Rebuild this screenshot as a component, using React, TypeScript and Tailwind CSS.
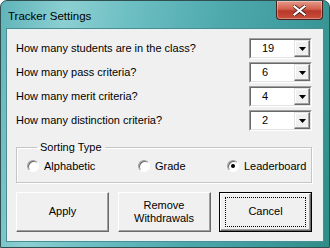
import { useState } from 'react';

type Sort = 'alpha' | 'grade' | 'leader';

const questions = [
  { label: 'How many students are in the class?', value: '19' },
  { label: 'How many pass criteria?', value: '6' },
  { label: 'How many merit criteria?', value: '4' },
  { label: 'How many distinction criteria?', value: '2' },
];

function Combo({ value }: { value: string }) {
  return (
    <div className="flex h-[21px] w-[63px] border border-t-[#a0a0a0] border-l-[#a0a0a0] border-b-white border-r-white bg-white">
      <div className="flex flex-1 border border-t-[#696969] border-l-[#696969] border-b-[#e3e3e3] border-r-[#e3e3e3]">
        <span className="flex-1 pl-[11px] leading-[17px]">{value}</span>
        <div className="flex w-[16px] items-center justify-center border border-t-[#e3e3e3] border-l-[#e3e3e3] border-b-[#696969] border-r-[#696969] bg-[#f0f0f0] shadow-[inset_-1px_-1px_0_#a0a0a0,inset_1px_1px_0_#fff]">
          <svg width="7" height="4" viewBox="0 0 7 4">
            <path d="M0 0h7L3.5 4z" fill="#000" />
          </svg>
        </div>
      </div>
    </div>
  );
}

function Radio({
  checked,
  label,
  onClick,
  className,
}: {
  checked: boolean;
  label: string;
  onClick: () => void;
  className?: string;
}) {
  return (
    <div className={`flex cursor-default items-center gap-[5px] ${className ?? ''}`} onClick={onClick}>
      <div className="flex h-[12px] w-[12px] items-center justify-center rounded-full border border-t-[#a0a0a0] border-l-[#a0a0a0] border-b-white border-r-white bg-white shadow-[inset_1px_1px_0_#696969]">
        {checked && <div className="h-[4px] w-[4px] rounded-full bg-black" />}
      </div>
      <span>{label}</span>
    </div>
  );
}

function Btn({ children, main }: { children: React.ReactNode; main?: boolean }) {
  const base =
    'flex h-[40px] w-[93px] items-center justify-center bg-[#f0f0f0] text-center leading-[13px]';
  if (main) {
    return (
      <div className={`${base} border border-black`}>
        <div className="flex h-full w-full items-center justify-center border border-t-white border-l-white border-b-[#696969] border-r-[#696969] shadow-[inset_-1px_-1px_0_#a0a0a0]">
          <div className="flex h-[30px] w-[81px] items-center justify-center border border-dotted border-black">
            {children}
          </div>
        </div>
      </div>
    );
  }
  return (
    <div
      className={`${base} border border-t-white border-l-white border-b-[#696969] border-r-[#696969] shadow-[inset_-1px_-1px_0_#a0a0a0]`}
    >
      {children}
    </div>
  );
}

export default function App() {
  const [sort, setSort] = useState<Sort>('leader');

  return (
    <div className="h-[248px] w-[330px] overflow-hidden bg-white font-['Liberation_Sans',Arial,sans-serif] text-[11px] text-black">
      <div className="flex h-full w-full flex-col rounded-t-[7px] border border-[#2f4f50] bg-[linear-gradient(100deg,#5fb4b9_0%,#8ccfd2_18%,#6dbfc3_35%,#4ea9ad_60%,#3f9c9e_80%,#2f8d88_100%)]">
        <div className="flex h-[28px] items-start justify-between pl-[7px] pr-[6px]">
          <span className="mt-[8px] text-[11.5px] leading-[14px]">Tracker Settings</span>
          <div className="flex h-[19px] w-[47px] items-center justify-center rounded-b-[4px] border border-t-0 border-[#4a1f1f] bg-[linear-gradient(#e59b8c_0%,#d2604c_45%,#b8382a_55%,#c9503a_100%)] shadow-[inset_0_0_0_1px_rgba(255,255,255,0.35)]">
            <svg width="13" height="11" viewBox="0 0 13 11">
              <path
                d="M1.5 1.5l10 8M11.5 1.5l-10 8"
                stroke="#3b1a1a"
                strokeWidth="3.6"
                strokeLinecap="square"
              />
              <path
                d="M1.5 1.5l10 8M11.5 1.5l-10 8"
                stroke="#fff"
                strokeWidth="2.2"
                strokeLinecap="square"
              />
            </svg>
          </div>
        </div>

        <div className="mx-[6px] flex h-[212px] flex-col border border-[#e6f3f3] bg-[#f0f0f0] pl-[8px] pr-[10px] pt-[8px] shadow-[0_0_0_1px_#4b8d90]">
          <div className="flex flex-col gap-[3px]">
            {questions.map(q => (
              <div key={q.label} className="flex items-center justify-between">
                <span>{q.label}</span>
                <Combo value={q.value} />
              </div>
            ))}
          </div>

          <fieldset className="mt-[10px] flex items-center border border-[#c5c5c5] pb-[7px] pl-[10px] pt-[5px] shadow-[inset_1px_1px_0_#fff,1px_1px_0_#fff]">
            <legend className="ml-[10px] px-[3px] leading-[12px]">Sorting Type</legend>
            <Radio
              className="w-[111px]"
              checked={sort === 'alpha'}
              label="Alphabetic"
              onClick={() => setSort('alpha')}
            />
            <Radio
              className="w-[89px]"
              checked={sort === 'grade'}
              label="Grade"
              onClick={() => setSort('grade')}
            />
            <Radio checked={sort === 'leader'} label="Leaderboard" onClick={() => setSort('leader')} />
          </fieldset>

          <div className="mt-[9px] flex justify-between">
            <Btn>Apply</Btn>
            <Btn>
              Remove
              <br />
              Withdrawals
            </Btn>
            <Btn main>Cancel</Btn>
          </div>
        </div>
      </div>
    </div>
  );
}
